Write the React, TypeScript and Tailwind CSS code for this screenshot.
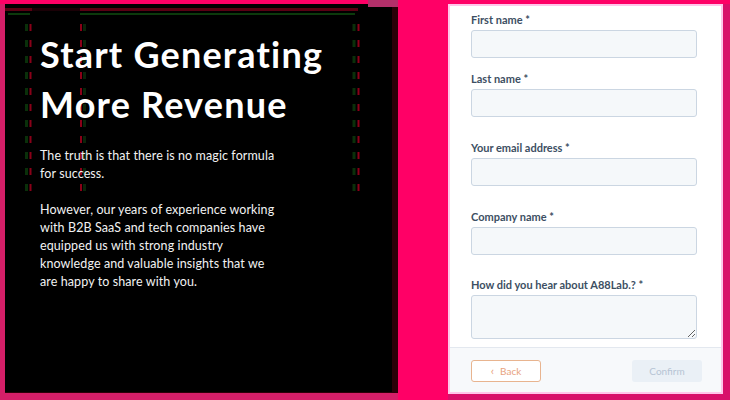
import React from "react";

const fields = [
  { label: "First name *", mt: "mt-0", area: false },
  { label: "Last name *", mt: "mt-[13px]", area: false },
  { label: "Your email address *", mt: "mt-[23px]", area: false },
  { label: "Company name *", mt: "mt-[23px]", area: false },
  { label: "How did you hear about A88Lab.? *", mt: "mt-[22px]", area: true },
];

function Decor() {
  // dashed guide lines over the dark panel
  const dash = { strokeWidth: 3, strokeDasharray: "7 9" };
  const red = { strokeWidth: 2, strokeDasharray: "7 9" };
  return (
    <svg className="absolute left-0 top-0 pointer-events-none" width="393" height="200">
      <rect x="0" y="4" width="27" height="3" fill="#5a0012" />
      <rect x="27" y="4" width="48" height="3" fill="#1a0006" />
      <rect x="75" y="4" width="278" height="3" fill="#5a0012" />
      <rect x="3" y="9" width="22" height="2" fill="#0c3a0c" />
      <rect x="75" y="9" width="275" height="2" fill="#0c3a0c" />
      <line x1="21.5" y1="20" x2="21.5" y2="190" stroke="#0a300a" {...dash} />
      <line x1="25.5" y1="20" x2="25.5" y2="190" stroke="#8a0018" {...red} />
      <line x1="76" y1="20" x2="76" y2="190" stroke="#8a0018" {...red} />
      <line x1="79.5" y1="20" x2="79.5" y2="190" stroke="#0a240a" {...dash} />
      <line x1="349" y1="20" x2="349" y2="190" stroke="#0a300a" {...dash} />
      <line x1="353.5" y1="20" x2="353.5" y2="190" stroke="#8a0018" {...red} />
    </svg>
  );
}

export default function App() {
  return (
    <div className="w-[730px] h-[400px] bg-[#ff0066] flex pt-[4px] overflow-hidden">
      {/* left dark panel */}
      <div className="w-[398px] h-[396px] bg-[#d41f68] pl-[5px] pb-[7px]">
        <div className="relative w-[393px] h-[389px] bg-black border-r-[6px] border-b border-[#2a0008] pl-[35px] pt-[25px] font-['Lato',sans-serif] text-white">
          <Decor />
          <div className="absolute right-[-6px] top-[-4px] w-[30px] h-[7px] bg-[#b3306a]" />
          <h1 className="relative text-[36px] leading-[50px] font-bold tracking-[1.2px]">
            Start Generating
            <br />
            More Revenue
          </h1>
          <div className="relative mt-[18px] text-[12.5px] leading-[18px] tracking-[0.1px] text-[#f2f2f2] whitespace-nowrap">
            <p>
              The truth is that there is no magic formula
              <br />
              for success.
            </p>
            <p className="mt-[18px]">
              However, our years of experience working
              <br />
              with B2B SaaS and tech companies have
              <br />
              equipped us with strong industry
              <br />
              knowledge and valuable insights that we
              <br />
              are happy to share with you.
            </p>
          </div>
        </div>
      </div>

      {/* right form panel */}
      <div className="ml-[50px] w-[282px] h-[396px] bg-[#d8106a] pr-[7px] pb-[6px]">
        <div className="w-[275px] h-[390px] bg-white border-2 border-[#ffc6ea] flex flex-col font-['Lato',sans-serif]">
          <div className="pl-[21px] pt-[6px]">
            {fields.map((f) => (
              <div key={f.label} className={f.mt}>
                <label className="block text-[11px] leading-[16px] font-bold text-[#3d4f63]">{f.label}</label>
                {f.area ? (
                  <textarea className="mt-[2px] block w-[226px] h-[44px] bg-[#f5f8fa] border border-[#cbd6e2] rounded-[3px] resize-y" />
                ) : (
                  <input className="mt-[2px] block w-[226px] h-[28px] bg-[#f5f8fa] border border-[#cbd6e2] rounded-[3px]" />
                )}
              </div>
            ))}
          </div>
          <div className="mt-auto h-[45px] bg-[#f7f9fb] border-t border-[#e3e8ef] flex items-start justify-between pl-[21px] pr-[19px] pt-[12px]">
            <button className="w-[70px] h-[22px] border border-[#e8b48f] rounded-[3px] bg-white text-[#e8a27e] text-[10px] flex items-center justify-center gap-[6px]">
              <span className="text-[12px] leading-none">‹</span>
              Back
            </button>
            <button className="w-[70px] h-[22px] rounded-[3px] bg-[#eaf0f6] text-[#b6c4d4] text-[10px]">Confirm</button>
          </div>
        </div>
      </div>
    </div>
  );
}
